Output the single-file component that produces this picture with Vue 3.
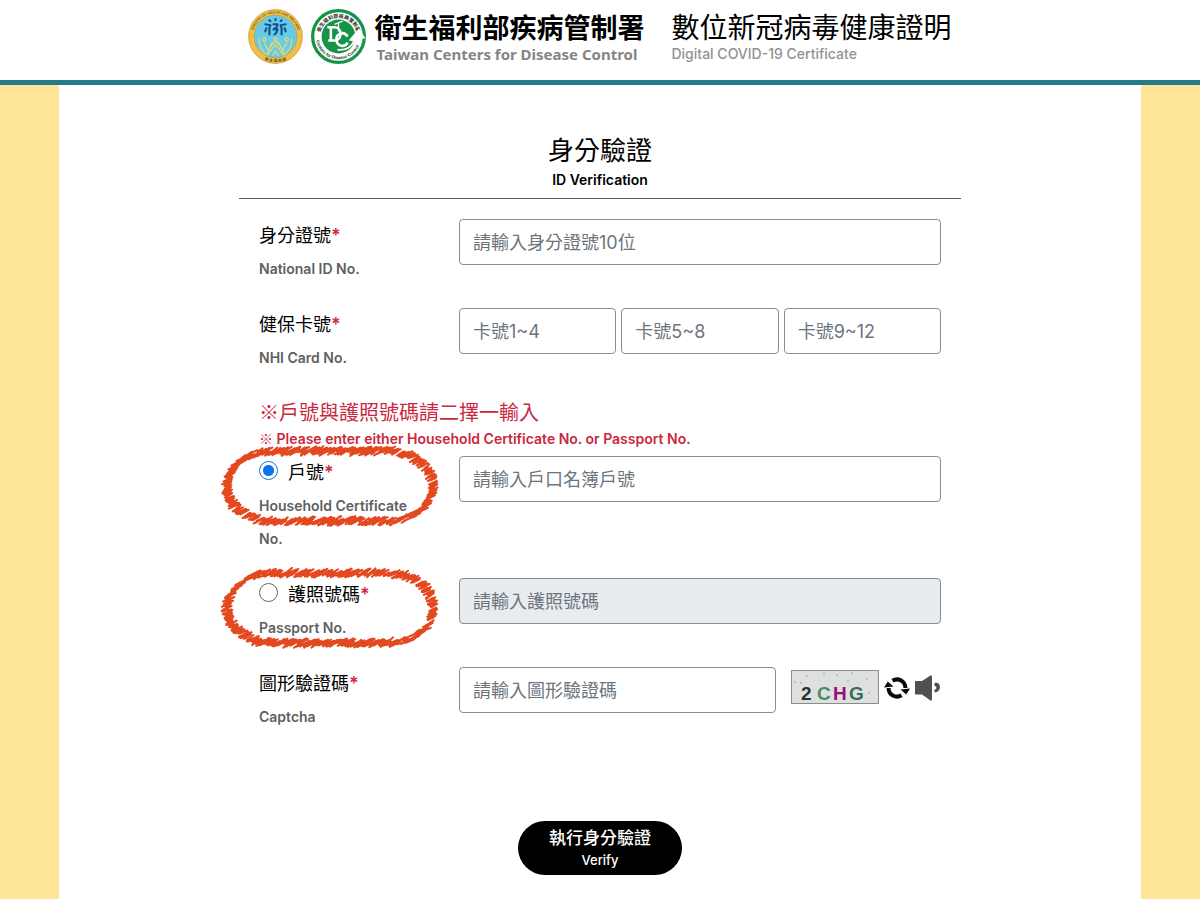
<script setup>
import { ref } from 'vue'

const choice = ref('household')

// Crayon ring: short slanted strokes laid along a rounded pill.
function crayonRing(seed) {
  let s = seed
  const rnd = () => {
    s = (s * 16807) % 2147483647
    return s / 2147483647
  }
  const left = 7
  const right = 213
  const top = 8
  const bottom = 78
  const rx = 46
  const ry = (bottom - top) / 2
  const cy = top + ry
  const straight = right - left - rx * 2
  const arc = Math.PI * 40
  const total = 2 * (straight + arc)
  let d = ''
  for (let p = 0; p < total; p += 1) {
    let x
    let y
    if (p < straight) {
      x = left + rx + p
      y = top
    } else if (p < straight + arc) {
      const t = ((p - straight) / arc) * Math.PI
      x = right - rx + rx * Math.sin(t)
      y = cy - ry * Math.cos(t)
    } else if (p < straight * 2 + arc) {
      x = right - rx - (p - straight - arc)
      y = bottom
    } else {
      const t = ((p - straight * 2 - arc) / arc) * Math.PI
      x = left + rx - rx * Math.sin(t)
      y = cy + ry * Math.cos(t)
    }
    x += (rnd() - 0.5) * 3
    y += (rnd() - 0.5) * 5
    const len = 2.5 + rnd() * 2.5
    const a = 0.35 + rnd() * 0.35
    const dx = Math.cos(a) * len
    const dy = Math.sin(a) * len
    d += `M${(x - dx).toFixed(1)} ${(y + dy).toFixed(1)}L${(x + dx).toFixed(1)} ${(y - dy).toFixed(1)}`
  }
  return d
}

const ringA = crayonRing(4711)
const ringB = crayonRing(90210)
</script>

<template>
  <div class="page">
    <header class="top">
      <svg class="seal" viewBox="0 0 54 54" role="img" aria-label="衛生福利部">
        <defs>
          <path id="mohw-top" d="M4.6 30A22.6 22.6 0 1 1 49.4 30" />
          <path id="mohw-bottom" d="M11 46.5A25.2 25.2 0 0 0 43 46.5" />
        </defs>
        <circle cx="27" cy="27" r="26.4" fill="#f4bf3f" stroke="#c09a4c" stroke-width="0.8" />
        <circle cx="27" cy="27" r="21" fill="#67cbe8" stroke="#a99a4c" stroke-width="0.6" />
        <text class="seal-text" font-size="3.2" fill="#6d5a2b"><textPath href="#mohw-top" startOffset="12%">MINISTRY OF HEALTH AND WELFARE</textPath></text>
        <text class="seal-text" font-size="3.6" fill="#4f4322"><textPath href="#mohw-bottom" startOffset="50%" text-anchor="middle">衛 生 福 利 部</textPath></text>
        <g fill="none" stroke="#dfd878" stroke-width="1.3" stroke-linejoin="round">
          <circle cx="16" cy="30" r="1.6" /><circle cx="27" cy="30" r="1.6" /><circle cx="38" cy="30" r="1.6" />
          <path d="M11 29C11 37 13 42 19 45C20 39 23 35 27 32C31 35 34 39 35 45C41 42 43 37 43 29" />
          <path d="M16 33L20 41L24 32M38 33L34 41L30 32M19 45L27 35L35 45M24 46L27 41L30 46" />
        </g>
        <g fill="none" stroke="#15508f" stroke-width="2.1" stroke-linecap="round" stroke-linejoin="round">
          <path d="M17 15L22 16L21 19L21 25M37 15L32 16L33 19L33 25M18 19L17 22M36 19L37 22" />
          <path d="M21 11L22 12M33 11L32 12M27 10V11" />
          <path d="M25 15H29L28 18L25 20H29L28 23L26 25" />
        </g>
      </svg>
      <svg class="seal" viewBox="0 0 54 54" role="img" aria-label="Taiwan CDC">
        <defs>
          <path id="cdc-top" d="M8.7 27A18.3 18.3 0 0 1 45.3 27" />
          <path id="cdc-bottom" d="M4.8 27A22.2 22.2 0 0 0 49.2 27" />
        </defs>
        <circle cx="27" cy="27" r="25.4" fill="#fff" stroke="#159447" stroke-width="3.2" />
        <text class="seal-text" font-size="4.9" fill="#1c2b22"><textPath href="#cdc-top" startOffset="50%" text-anchor="middle">衛生福利部疾病管制署</textPath></text>
        <circle cx="27" cy="27" r="16.6" fill="#159447" />
        <path d="M37 31L47 19L53.5 29L48.5 29C47 33 45 36 42 38L44 32Z" fill="#fff" />
        <text class="seal-text" font-size="4.2" fill="#1c2b22"><textPath href="#cdc-bottom" startOffset="46%" text-anchor="middle">Centers for Disease Control</textPath></text>
        <g fill="none" stroke="#fff" stroke-width="2.5">
          <path d="M16 18H23C31 18 31 31 23 31H17M19.5 18V31" />
          <path d="M36 27C32 21 24 24 25 31C26 37 33 38 36 33" />
          <path d="M27 13V22M23 15L31 12" stroke-width="1.3" />
          <path d="M26 40C34 41 40 37 43 30" stroke-width="1.8" />
        </g>
      </svg>
      <div class="agency">
        <strong class="agency-zh">衛生福利部疾病管制署</strong>
        <span class="agency-en">Taiwan Centers for Disease Control</span>
      </div>
      <div class="product">
        <span class="product-zh">數位新冠病毒健康證明</span>
        <span class="product-en">Digital COVID-19 Certificate</span>
      </div>
    </header>

    <main class="sheet">
      <form class="form" @submit.prevent>
        <h1 class="title">身分驗證<small>ID Verification</small></h1>

        <div class="fields">
          <div class="row">
            <label class="label" for="nid">身分證號<b>*</b><small>National ID No.</small></label>
            <input id="nid" class="box" type="text" placeholder="請輸入身分證號10位" />
          </div>

          <div class="row">
            <label class="label" for="nhi1">健保卡號<b>*</b><small>NHI Card No.</small></label>
            <div class="cards">
              <input id="nhi1" class="box" type="text" placeholder="卡號1~4" />
              <input class="box" type="text" placeholder="卡號5~8" aria-label="卡號5~8" />
              <input class="box" type="text" placeholder="卡號9~12" aria-label="卡號9~12" />
            </div>
          </div>

          <p class="notice"><i>※</i>戶號與護照號碼請二擇一輸入<small><i>※</i> Please enter either Household Certificate No. or Passport No.</small></p>

          <div class="row">
            <label class="label">
              <input v-model="choice" class="radio" type="radio" name="doc" value="household" />戶號<b>*</b><small>Household Certificate No.</small>
            </label>
            <input class="box" type="text" placeholder="請輸入戶口名簿戶號" aria-label="戶號" :disabled="choice !== 'household'" />
            <svg class="ring" viewBox="0 0 220 84" aria-hidden="true"><path :d="ringA" /></svg>
          </div>

          <div class="row">
            <label class="label">
              <input v-model="choice" class="radio" type="radio" name="doc" value="passport" />護照號碼<b>*</b><small>Passport No.</small>
            </label>
            <input class="box" type="text" placeholder="請輸入護照號碼" aria-label="護照號碼" :disabled="choice !== 'passport'" />
            <svg class="ring" viewBox="0 0 220 84" aria-hidden="true"><path :d="ringB" /></svg>
          </div>

          <div class="row">
            <label class="label" for="captcha">圖形驗證碼<b>*</b><small>Captcha</small></label>
            <div class="captcha">
              <input id="captcha" class="box" type="text" placeholder="請輸入圖形驗證碼" />
              <svg class="code" viewBox="0 0 88 34">
                <rect x="0.5" y="0.5" width="87" height="33" fill="#dedfdf" stroke="#8b8b8b" />
                <g fill="#b4b8bb">
                  <circle cx="16" cy="6" r="1" /><circle cx="33" cy="4" r="1" /><circle cx="46" cy="5" r="1" />
                  <circle cx="61" cy="3" r="1" /><circle cx="76" cy="9" r="1" /><circle cx="4" cy="12" r="1" />
                  <circle cx="10" cy="13" r="1" /><circle cx="78" cy="23" r="1" /><circle cx="57" cy="11" r="1" />
                </g>
                <text x="10" y="30" fill="#26352f">2</text>
                <text x="26" y="30" fill="#4b8b68">C</text>
                <text x="42" y="30" fill="#96107c">H</text>
                <text x="58" y="30" fill="#2f6f5c">G</text>
              </svg>
              <button class="icon" type="button" aria-label="重新產生">
                <svg viewBox="0 0 26 24" width="26" height="24">
                  <g fill="none" stroke="#0a0a0a" stroke-width="4">
                    <path d="M4.6 12A8.4 8.4 0 0 0 17.5 19.2" />
                    <path d="M21.4 12A8.4 8.4 0 0 0 8.5 4.8" />
                  </g>
                  <path d="M0 11.5L3.8 5.5L9.5 10.5ZM16.5 13.5L26 12.5L22.2 18.5Z" fill="#0a0a0a" />
                </svg>
              </button>
              <button class="icon" type="button" aria-label="語音播放">
                <svg viewBox="0 0 27 26" width="27" height="26">
                  <path d="M1 6.5Q1 6 1.5 6H8L16.5 0.5Q18 0 18 1.5V24.5Q18 26 16.5 25.5L8 19.5H1.5Q1 19.5 1 19Z" fill="#505050" />
                  <path d="M20.5 8C27.5 6 28 17 20.5 17.5V14.5C23 14.5 23 11 20.5 11Z" fill="#505050" />
                </svg>
              </button>
            </div>
          </div>
        </div>

        <button class="verify" type="submit">執行身分驗證<small>Verify</small></button>
      </form>
    </main>
  </div>
</template>

<style>
body {
  margin: 0;
}
</style>

<style scoped>
.page {
  min-height: 100vh;
  display: flex;
  flex-direction: column;
  background: #ffe599;
  color: #000;
  font-family: Inter, "Noto Sans CJK TC", sans-serif;
}
.top {
  display: flex;
  justify-content: center;
  align-items: flex-start;
  gap: 8px;
  height: 71px;
  padding-top: 9px;
  background: #fff;
  border-bottom: 5px solid #277a8c;
}
.seal {
  width: 55px;
  height: 55px;
  flex: none;
}
.seal-text {
  font-family: "Liberation Sans", "Noto Sans CJK TC", sans-serif;
  font-weight: 700;
}
.agency,
.product {
  display: flex;
  flex-direction: column;
  white-space: nowrap;
}
.agency-zh {
  font-size: 27px;
  line-height: 40px;
  font-weight: 700;
}
.agency-en {
  padding-left: 2px;
  font: 700 15px/10px "Noto Sans", sans-serif;
  color: #858585;
}
.product {
  margin-left: 19px;
}
.product-zh {
  font-size: 28px;
  line-height: 38px;
}
.product-en {
  font-size: 14px;
  line-height: 14px;
  font-weight: 500;
  color: #929292;
}
.sheet {
  flex: 1;
  margin: 0 59px;
  padding: 46px 20px 24px;
  background: #fff;
}
.form {
  max-width: 722px;
  margin: 0 auto;
}
.title {
  margin: 0;
  padding-bottom: 9px;
  border-bottom: 1px solid #555;
  text-align: center;
  font-size: 26px;
  line-height: 40px;
  font-weight: 400;
}
small {
  display: block;
}
.title small {
  font-size: 14px;
  line-height: 18px;
  font-weight: 600;
}
.fields {
  padding: 20px 20px 0;
}
.row {
  position: relative;
  display: grid;
  grid-template-columns: 160px minmax(0, 1fr);
  column-gap: 40px;
  align-items: start;
  margin-bottom: 23px;
}
.label {
  font-size: 18px;
  line-height: 33px;
}
.label b {
  color: #d02a3f;
  font-weight: 600;
  line-height: 1;
}
.label small {
  font-size: 14px;
  line-height: 33px;
  font-weight: 600;
  color: #606060;
}
.box {
  width: 100%;
  min-width: 0;
  height: 46px;
  box-sizing: border-box;
  padding: 0 13px;
  border: 1px solid #8c8c8c;
  border-radius: 4px;
  background: #fff;
  font-family: inherit;
  font-size: 18px;
  color: #333;
}
.box::placeholder {
  color: #6c757d;
  opacity: 1;
}
.box:disabled {
  background: #e9ecef;
}
.cards {
  display: grid;
  grid-template-columns: repeat(3, 1fr);
  gap: 5px;
}
.notice {
  margin: 0 0 8px;
  font-size: 20px;
  line-height: 32px;
  color: #c9283e;
}
.notice i {
  font-family: "Noto Sans CJK TC", sans-serif;
  font-style: normal;
  font-weight: 400;
  line-height: 1;
}
.notice small {
  font-size: 14px;
  line-height: 19px;
  font-weight: 600;
}
.radio {
  appearance: none;
  width: 19px;
  height: 19px;
  margin: 0 10px 0 0;
  border: 1px solid #666;
  border-radius: 50%;
  background: #fff;
  vertical-align: -1px;
}
.radio:checked {
  border-color: #1a6fd0;
  background: radial-gradient(circle, #0b72ee 5px, #fff 6px);
}
.ring {
  position: absolute;
  left: -39px;
  top: -13px;
  width: 220px;
  height: 84px;
  overflow: visible;
  pointer-events: none;
}
.ring path {
  fill: none;
  stroke: #e4481f;
  stroke-width: 2;
  stroke-linecap: round;
}
.captcha {
  display: flex;
  align-items: center;
}
.captcha .box {
  flex: 1;
}
.code {
  flex: none;
  width: 88px;
  height: 34px;
  margin: 0 5px 6px 15px;
}
.code text {
  font: 700 19px "Liberation Sans", sans-serif;
}
.icon {
  display: flex;
  flex: none;
  margin: 0 0 4px;
  padding: 0;
  border: 0;
  background: none;
}
.icon + .icon {
  margin-left: 4px;
}
.verify {
  display: block;
  width: 164px;
  height: 54px;
  margin: 88px auto 0;
  padding: 0;
  border: 0;
  border-radius: 27px;
  background: #000;
  color: #fff;
  font-family: inherit;
  font-size: 17px;
  line-height: 24px;
  font-weight: 500;
}
.verify small {
  font-size: 13px;
  line-height: 20px;
}
</style>
